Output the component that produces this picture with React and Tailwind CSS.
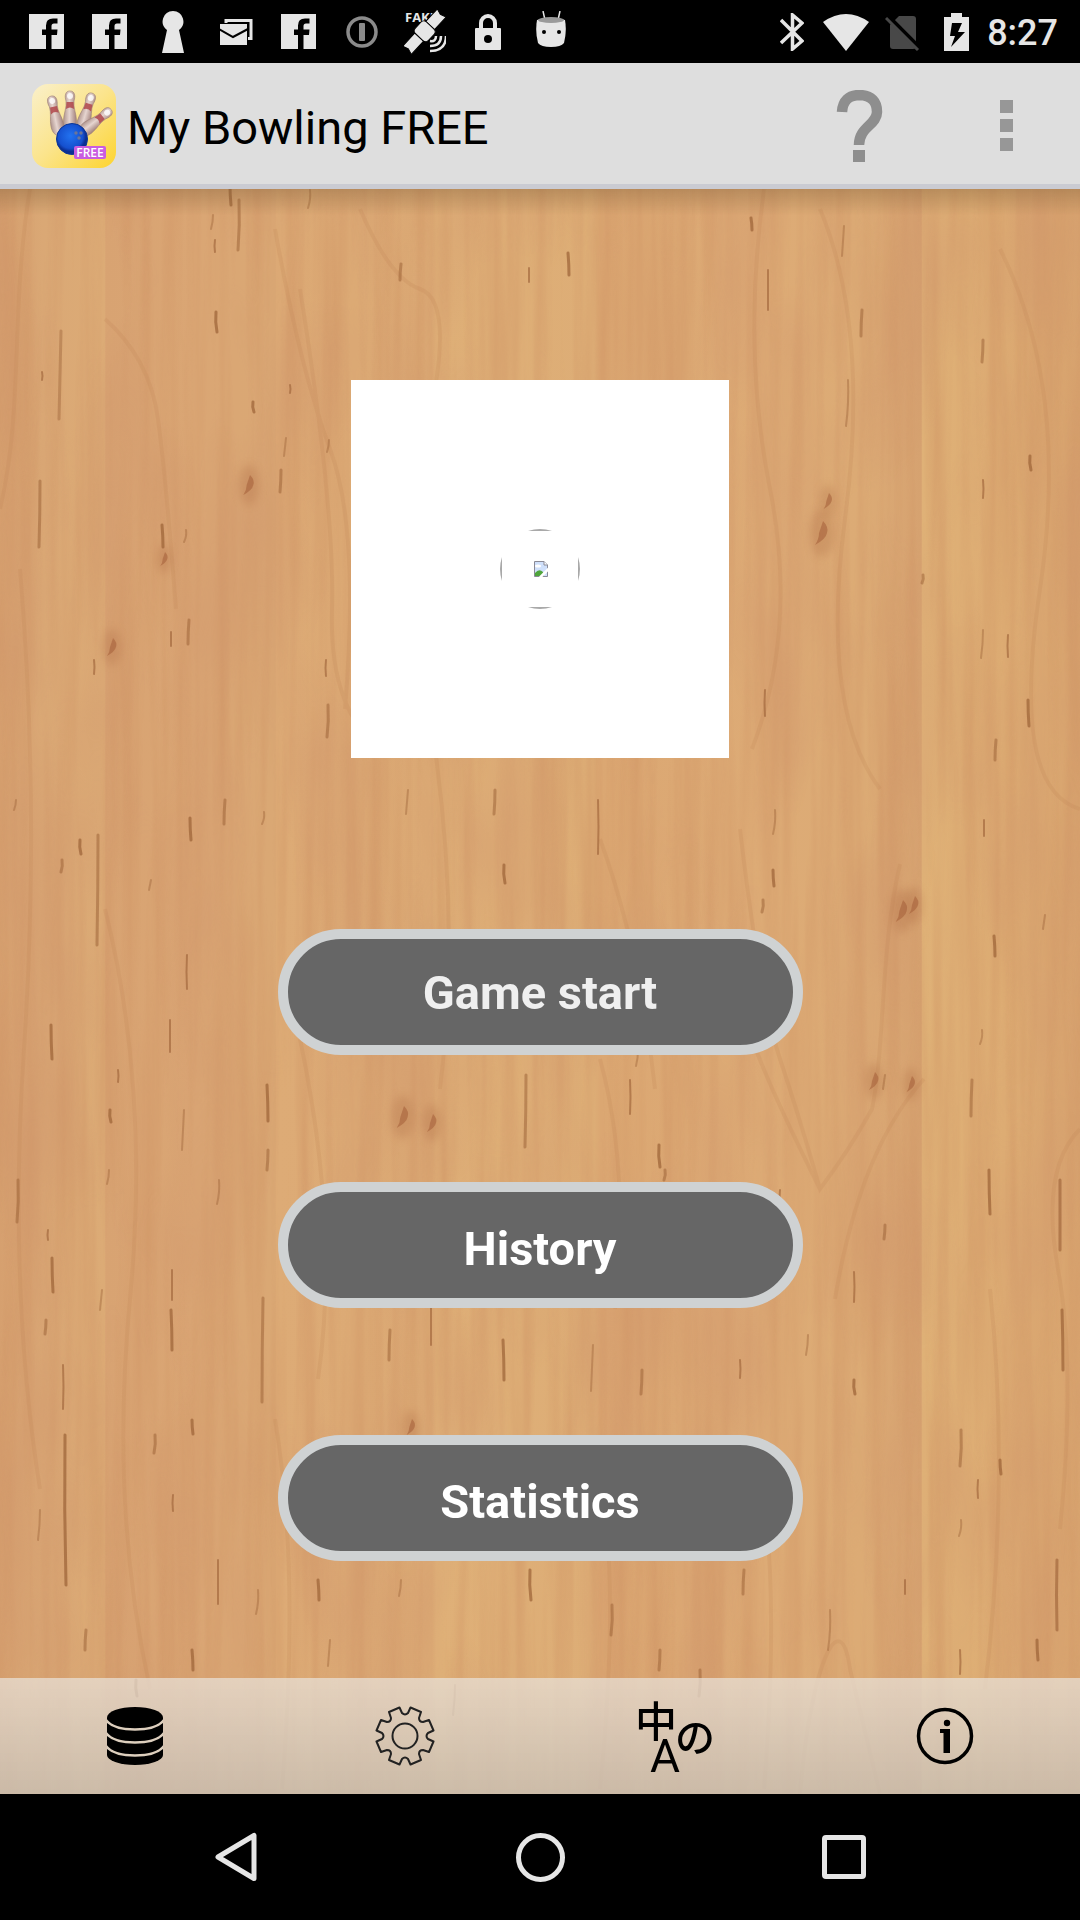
import React from "react";

/* Wood flecks: x, y, length */
const FLECKS = [
  [61, 151, 88], [40, 301, 66], [42, 192, 8], [216, 132, 20], [213, 35, 14], [239, 20, 50], [215, 60, 12],
  [230, 5, 20], [310, 10, 18], [401, 84, 16], [529, 88, 14], [568, 73, 22], [844, 46, 30], [983, 160, 22],
  [983, 300, 18], [1030, 276, 14], [983, 450, 28], [923, 395, 8], [1008, 455, 22], [1028, 520, 26], [848, 200, 46],
  [862, 130, 26], [768, 90, 40], [751, 38, 12], [286, 258, 18], [281, 290, 22], [290, 205, 8], [253, 222, 10],
  [329, 260, 12], [328, 525, 32], [326, 480, 16], [190, 638, 22], [186, 350, 12], [189, 440, 24], [171, 452, 14],
  [162, 345, 22], [151, 700, 10], [98, 655, 110], [94, 480, 14], [80, 660, 14], [16, 620, 10], [62, 680, 12],
  [187, 775, 34], [51, 845, 34], [264, 632, 12], [225, 620, 24], [170, 840, 32], [267, 905, 36], [184, 930, 40],
  [268, 970, 20], [118, 890, 12], [110, 930, 12], [109, 990, 14], [18, 1000, 42], [48, 1050, 10], [52, 1078, 34],
  [219, 1000, 24], [263, 1118, 104], [172, 1090, 30], [171, 1130, 40], [102, 1110, 20], [46, 1140, 14], [63, 1185, 44],
  [65, 1255, 150], [40, 1330, 30], [155, 1255, 18], [173, 1315, 16], [192, 1240, 14], [258, 1410, 24], [86, 1450, 20],
  [218, 1380, 44], [192, 1470, 20], [408, 610, 24], [495, 610, 24], [598, 620, 54], [504, 685, 18], [507, 560, 14],
  [763, 720, 12], [765, 510, 26], [773, 690, 16], [775, 630, 24], [996, 560, 20], [984, 640, 16], [994, 756, 20],
  [1045, 735, 14], [526, 895, 72], [630, 900, 34], [659, 965, 22], [638, 870, 16], [665, 990, 10], [780, 1010, 24],
  [989, 990, 44], [982, 850, 14], [972, 900, 36], [1060, 1000, 70], [1062, 1130, 60], [885, 895, 14], [885, 1045, 14],
  [854, 1092, 30], [854, 1200, 14], [808, 1155, 20], [961, 1250, 36], [978, 1300, 18], [1000, 1280, 14], [961, 1340, 16],
  [390, 1150, 30], [431, 1125, 40], [503, 1160, 40], [593, 1165, 46], [642, 1190, 24], [740, 1180, 18], [530, 1390, 30],
  [401, 1400, 16], [612, 1425, 30], [1057, 1380, 70], [1037, 1460, 20], [830, 1430, 40], [744, 1390, 24], [905, 1400, 14],
  [318, 1400, 20], [330, 1460, 26], [660, 1470, 20], [960, 1470, 24], [136, 1500, 16], [455, 1505, 30], [700, 1490, 26],
];

/* Long soft grain lines that run along the planks */
const GRAIN = [
  "M30 0C10 120 24 220 0 320", "M105 130Q150 170 158 230T176 420", "M275 40Q300 180 330 260T345 520",
  "M300 100Q335 320 332 420T380 560", "M764 0Q742 160 770 300T752 560", "M820 20Q870 140 845 330T880 600",
  "M900 675C880 760 885 860 872 920Q850 960 820 1000Q800 930 780 870T740 640", "M820 1000Q770 900 752 850",
  "M924 890Q860 960 835 1110", "M1080 940Q1040 980 1058 1080T1060 1340", "M600 650Q640 760 655 900",
  "M600 870Q630 980 615 1120", "M435 560Q460 740 440 900", "M105 720Q150 900 130 1110T150 1500",
  "M275 1230Q300 1380 282 1600", "M300 850Q340 1040 318 1190", "M600 1280Q620 1400 600 1600",
  "M800 1605C810 1480 840 1410 850 1480T880 1605", "M760 1280Q780 1400 764 1600", "M1000 60Q1070 200 1040 400T1080 620",
  "M20 380Q40 620 24 860T40 1300", "M360 20Q390 90 420 100T435 200", "M990 1100Q1010 1290 985 1500",
];

/* Knots: x, y, size */
const KNOTS = [[249, 296, 10], [822, 344, 12], [902, 722, 11], [914, 716, 9], [112, 458, 9], [403, 928, 11], [432, 934, 9], [874, 892, 9], [911, 895, 8], [164, 370, 7], [828, 312, 8], [411, 1238, 8]];

function Wood() {
  return (
    <svg className="absolute inset-0 h-full w-full" viewBox="0 0 1080 1605" preserveAspectRatio="xMidYMid slice" aria-hidden="true">
      <defs>
        <linearGradient id="planks" x1="0" x2="1" y1="0" y2="0">
          <stop offset="0" stopColor="#d6a06f" />
          <stop offset="0.04" stopColor="#daa875" />
          <stop offset="0.097" stopColor="#dcab76" />
          <stop offset="0.098" stopColor="#d8a372" />
          <stop offset="0.18" stopColor="#daa674" />
          <stop offset="0.255" stopColor="#daa874" />
          <stop offset="0.256" stopColor="#ddab76" />
          <stop offset="0.4" stopColor="#dba974" />
          <stop offset="0.404" stopColor="#dfb078" />
          <stop offset="0.55" stopColor="#ddad76" />
          <stop offset="0.556" stopColor="#dba772" />
          <stop offset="0.706" stopColor="#ddab76" />
          <stop offset="0.8" stopColor="#dcab75" />
          <stop offset="0.853" stopColor="#d6a270" />
          <stop offset="0.854" stopColor="#dfb177" />
          <stop offset="0.93" stopColor="#ddac73" />
          <stop offset="1" stopColor="#d8a46f" />
        </linearGradient>
        <filter id="fibre" x="0" y="0" width="1" height="1" colorInterpolationFilters="sRGB">
          <feTurbulence type="fractalNoise" baseFrequency="0.06 0.0025" numOctaves="3" seed="8" />
          <feColorMatrix values="0 0 0 0 0.8  0 0 0 0 0.56  0 0 0 0 0.38  1.8 0 0 0 -0.65" />
        </filter>
        <filter id="patches" x="0" y="0" width="1" height="1" colorInterpolationFilters="sRGB">
          <feTurbulence type="fractalNoise" baseFrequency="0.012 0.004" numOctaves="3" seed="3" />
          <feColorMatrix values="0 0 0 0 0.81  0 0 0 0 0.58  0 0 0 0 0.42  0 2 0 0 -0.8" />
        </filter>
        <filter id="soft" x="-1" y="-1" width="3" height="3"><feGaussianBlur stdDeviation="4" /></filter>
        <filter id="slight" x="-0.1" y="-0.1" width="1.2" height="1.2"><feGaussianBlur stdDeviation="0.7" /></filter>
        <linearGradient id="headShade" x1="0" x2="0" y1="0" y2="1">
          <stop offset="0" stopColor="#7a5a34" stopOpacity="0.35" />
          <stop offset="1" stopColor="#7a5a34" stopOpacity="0" />
        </linearGradient>
      </defs>
      <rect width="1080" height="1605" fill="url(#planks)" />
      <rect width="1080" height="1605" filter="url(#fibre)" opacity="0.45" />
      <rect width="1080" height="1605" filter="url(#patches)" opacity="0.45" />
      <g fill="none" stroke="#c08454" strokeWidth="4" opacity="0.2" filter="url(#slight)">
        {GRAIN.map((d) => <path key={d} d={d} />)}
      </g>
      {KNOTS.map(([x, y, s]) => (
        <g key={`${x}-${y}`} fill="#a8643c">
          <ellipse cx={x} cy={y} rx={s} ry={s * 2} opacity="0.25" filter="url(#soft)" />
          <path d={`M${x + 1} ${y - s}q${s / 2} ${s / 2} ${s / 3} ${s}q-1 ${s / 2} -${s} ${s}q${s / 3} -${s / 2} ${s / 3} -${s}z`} opacity="0.6" filter="url(#slight)" />
        </g>
      ))}
      <g fill="none" stroke="#9c6238" strokeLinecap="round" filter="url(#slight)">
        {FLECKS.map(([x, y, l], i) => (
          <path key={i} d={`M${x} ${y - 9}q${(i % 3) - 1} ${l / 2} ${(i % 4) - 2} ${l}`} strokeWidth={l > 60 ? 3 : 2 + (i % 2)} opacity={0.42 + (i % 4) * 0.1} />
        ))}
      </g>
      <rect width="1080" height="26" fill="url(#headShade)" />
    </svg>
  );
}

const FacebookIcon = () => (
  <svg className="h-[35px] w-[35px]" viewBox="0 0 35 35">
    <path fill="#e6e6e6" d="M0 0H35V35H22.500V21H28L28.500 15.500H22.500V12Q22.500 9.500 25 9.500H28.500V4.500H24Q17 4.500 17 11.500V15.500H13V21H17V35H0Z" />
  </svg>
);
const KeyholeIcon = () => (
  <svg className="h-[42px] w-6" viewBox="0 0 24 42">
    <path fill="#e6e6e6" d="M12 0a10.500 10.500 0 0 1 6 19L23 42H1L6 19A10.500 10.500 0 0 1 12 0Z" />
  </svg>
);
const MailIcon = () => (
  <svg className="h-[26px] w-[34px]" viewBox="0 0 34 26">
    <path d="M7 4V1.500H32V19.500H29" fill="none" stroke="#e6e6e6" strokeWidth="3" />
    <path d="M1 5H28V26H1Z" fill="#e6e6e6" />
    <path d="M0 10L14 18L29 10" fill="none" stroke="#000" strokeWidth="2" />
  </svg>
);
const OneIcon = () => (
  <svg className="h-8 w-8" viewBox="0 0 32 32">
    <circle cx="16" cy="16" r="14" fill="none" stroke="#8b8b8b" strokeWidth="3.500" />
    <rect x="13" y="7" width="6" height="18" rx="1" fill="#8b8b8b" />
  </svg>
);
const SatelliteIcon = () => (
  <svg className="h-[54px] w-[42px]" viewBox="0 -6 42 54">
    <text x="1" y="11" fontFamily="Open Sans, sans-serif" fontWeight="700" fontSize="13" fill="#e6e6e6">FAKE</text>
    <g transform="rotate(43 20 21)" fill="#e6e6e6" stroke="#000" strokeWidth="1">
      <path d="M14 -5L20 -3L26 -5V12H14Z" />
      <path d="M14 28H26V46L20 44L14 46Z" />
      <rect x="11" y="12" width="18" height="16" rx="4" />
    </g>
    <path d="M26 30Q32 31 32 25M26 35Q37 35 37 25M26 40Q42 40 42 25" fill="none" stroke="#e6e6e6" strokeWidth="2.500" />
  </svg>
);
const LockIcon = () => (
  <svg className="h-9 w-[26px]" viewBox="0 0 26 36">
    <path d="M6 15V9a7 7 0 0 1 14 0V15" fill="none" stroke="#e6e6e6" strokeWidth="4" />
    <rect y="14" width="26" height="22" rx="1" fill="#e6e6e6" />
    <circle cx="13" cy="25" r="4" fill="#000" />
  </svg>
);
const DroidIcon = () => (
  <svg className="h-[42px] w-[30px]" viewBox="0 0 30 42">
    <path d="M7 0L9 9M24 0L22 9" stroke="#e6e6e6" strokeWidth="1.500" />
    <path d="M1 9Q15 5 29 9Q31 20 28 32Q25 36 15 36T2 32Q-1 20 1 9Z" fill="#e6e6e6" />
    <ellipse cx="15" cy="9" rx="13" ry="3" fill="#9a9a9a" />
    <circle cx="8" cy="21" r="2" /><circle cx="23" cy="21" r="2" />
  </svg>
);

const NOTIFICATIONS = [FacebookIcon, FacebookIcon, KeyholeIcon, MailIcon, FacebookIcon, OneIcon, SatelliteIcon, LockIcon, DroidIcon];

function StatusBar() {
  return (
    <div className="flex h-[63px] shrink-0 items-center justify-between bg-black pl-[15px] pr-[22px]">
      <div className="flex">
        {NOTIFICATIONS.map((Icon, i) => (
          <span key={i} className="flex w-[63px] items-center justify-center"><Icon /></span>
        ))}
      </div>
      <div className="flex items-center">
        <svg className="mr-[19px] h-[38px] w-6" viewBox="0 0 24 38" fill="none" stroke="#e6e6e6" strokeWidth="3.500">
          <path d="M1 7L22 28L12.500 36V2L22 10L1 30" />
        </svg>
        <svg className="mr-4 h-[38px] w-[46px]" viewBox="0 0 46 38"><path d="M0 9Q23 -7 46 9L23 38Z" fill="#e6e6e6" /></svg>
        <svg className="mr-6 h-[38px] w-[35px]" viewBox="0 0 35 38">
          <path d="M10 7L14 3H28Q31 3 31 6V33Q31 36 28 36H8Q5 36 5 33V12Z" fill="#484848" />
          <path d="M3 3L35 35" stroke="#000" strokeWidth="4" /><path d="M1 5L33 37" stroke="#484848" strokeWidth="3" />
        </svg>
        <svg className="mr-[18px] h-[38px] w-[25px]" viewBox="0 0 25 38">
          <path d="M0 4H7V0H18V4H25V38H0Z" fill="#e6e6e6" />
          <path d="M8 10H18L14 19H21L7 34L11 23H6Z" fill="#000" />
        </svg>
        <span className="pt-0.5 text-4xl font-medium leading-10 text-[#e6e6e6]">8:27</span>
      </div>
    </div>
  );
}

/* Bowling pins: x, y, angle */
const PINS = [[20, 16, -12], [38, 11, 0], [59, 13, 16], [76, 28, 52]];

function AppIcon() {
  return (
    <svg className="h-[84px] w-[84px] shrink-0" viewBox="0 0 84 84" aria-hidden="true">
      <defs>
        <linearGradient id="tile" x1="0" y1="0" x2="1" y2="1">
          <stop offset="0" stopColor="#faf0cb" /><stop offset="0.5" stopColor="#fbe48b" /><stop offset="1" stopColor="#fdd42f" />
        </linearGradient>
        <linearGradient id="pin" x1="0" x2="1">
          <stop offset="0" stopColor="#b0958e" /><stop offset="0.45" stopColor="#e6d5d0" /><stop offset="1" stopColor="#a1807a" />
        </linearGradient>
        <radialGradient id="ball" cx="0.45" cy="0.4"><stop offset="0" stopColor="#2272f0" /><stop offset="0.8" stopColor="#1550cf" /><stop offset="1" stopColor="#0b2f94" /></radialGradient>
      </defs>
      <rect width="84" height="84" rx="16" fill="url(#tile)" />
      {PINS.map(([x, y, a]) => (
        <g key={x} transform={`translate(${x} ${y}) rotate(${a})`}>
          <path d="M0 -4C5 -4 5.500 1 4 6C3 12 6.500 19 6.500 26C6.500 32 4 36 0 36S-6.500 32 -6.500 26C-6.500 19 -3 12 -4 6C-5.500 1 -5 -4 0 -4Z" fill="url(#pin)" stroke="#9c7f78" strokeWidth="0.600" />
          <path d="M-3.500 7H3.500L4 14Q0 11 -4 14Z" fill="#b0474a" opacity="0.85" />
          <circle cy="1" r="3" fill="#fff" opacity="0.800" />
        </g>
      ))}
      <circle cx="40" cy="55" r="15.500" fill="url(#ball)" stroke="#0d3796" />
      <g fill="#6b7598"><circle cx="44" cy="49" r="1.700" /><circle cx="49" cy="49" r="1.700" /><circle cx="47" cy="54" r="1.700" /></g>
      <rect x="42" y="62" width="32" height="13" rx="2" fill="#c95ce0" />
      <text x="58" y="73" textAnchor="middle" fontFamily="Open Sans, sans-serif" fontWeight="600" fontSize="12" fill="#fff">FREE</text>
    </svg>
  );
}

function Header() {
  return (
    <header className="flex h-[126px] shrink-0 items-center border-b-[5px] border-[#cacbd2] bg-[#dedede] pl-8 pt-1">
      <AppIcon />
      <h1 className="grow pl-[11px] pt-1 text-[47px] leading-[56px] text-black">My Bowling FREE</h1>
      <button type="button" aria-label="Help" className="flex h-full w-[147px] items-center justify-center pt-0.5">
        <svg className="h-[73px] w-12" viewBox="0 0 48 73">
          <path d="M6 22Q7 5 24 5Q41 6 41 22C41 35 23 37 23 55" fill="none" stroke="#8e8e8e" strokeWidth="10.500" />
          <rect x="17" y="60" width="12" height="12" fill="#8e8e8e" />
        </svg>
      </button>
      <button type="button" aria-label="More options" className="flex h-full w-[147px] flex-col items-center justify-center gap-[6px]">
        <span className="h-[13px] w-[13px] bg-[#979797]" />
        <span className="h-[13px] w-[13px] bg-[#979797]" />
        <span className="h-[13px] w-[13px] bg-[#979797]" />
      </button>
    </header>
  );
}

function ImageFrame() {
  return (
    <div className="flex aspect-square w-[35%] items-center justify-center bg-white">
      <svg className="h-20 w-20" viewBox="0 0 80 80" role="img" aria-label="Image not available">
        <path d="M28 2Q40 -2 52 2ZM28 78Q40 82 52 78ZM2 28Q-2 40 2 52ZM78 28Q82 40 78 52Z" fill="#a9a9a9" />
        <path d="M34.500 32.500H44L47.500 36V47.500H34.500Z" fill="#cfe0fb" stroke="#8a8a96" />
        <path d="M44 32.500V36H47.500" fill="#fff" stroke="#8a8a96" />
        <ellipse cx="38" cy="37" rx="3" ry="1.500" fill="#fff" />
        <path d="M35 47V44Q39 39 43 43L44 47Z" fill="#4fa53c" />
        <path d="M40 48.500L49 39.500" stroke="#fff" strokeWidth="2.500" />
      </svg>
    </div>
  );
}

function MenuButton({ focused, children }) {
  return (
    <button type="button" className={`h-[126px] w-full rounded-full border-[10px] border-[#cfd2d3] bg-[#666] text-[47px] font-bold leading-[56px] ${focused ? "pt-0.5 text-[#efefef]" : "pt-2 text-white"}`}>
      {children}
    </button>
  );
}

function BottomBar() {
  const cell = "flex items-center justify-center";
  return (
    <nav className="relative grid h-[116px] shrink-0 grid-cols-4 bg-linear-to-b from-[#e8e0d6]/75 to-[#c8c0b5]/80">
      <button type="button" aria-label="Data" className={cell}>
        <svg className="h-[58px] w-14" viewBox="0 0 56 58">
          <path d="M0 10.500A28 10.500 0 0 1 56 10.500V48A28 10 0 0 1 0 48Z" />
          <path d="M-1 13Q6 22.500 28 22.500T57 13M-1 26Q6 35.500 28 35.500T57 26M-1 39Q6 48.500 28 48.500T57 39" fill="none" stroke="#ddcfbe" strokeWidth="2.500" />
        </svg>
      </button>
      <button type="button" aria-label="Settings" className={cell}>
        <svg className="h-[60px] w-[60px]" viewBox="-30 -30 60 60" fill="none" stroke="#222" strokeWidth="2" strokeLinejoin="round">
          <path d="M-5.500 -28.500L-16 -24L-14 -18Q-14 -14 -18 -14L-24 -16L-28.500 -5.500L-23 -3Q-20 0 -23 3L-28.500 5.500L-24 16L-18 14Q-14 14 -14 18L-16 24L-5.500 28.500L-3 23Q0 20 3 23L5.500 28.500L16 24L14 18Q14 14 18 14L24 16L28.500 5.500L23 3Q20 0 23 -3L28.500 -5.500L24 -16L18 -14Q14 -14 14 -18L16 -24L5.500 -28.500L3 -23Q0 -20 -3 -23Z" />
          <circle r="12.500" />
        </svg>
      </button>
      <button type="button" aria-label="Language" className={cell}>
        <svg className="h-[116px] w-[100px]" viewBox="-10 -18 100 116" fontFamily="Noto Sans CJK JP, sans-serif" fontWeight="500">
          <text x="0" y="41" fontSize="42">中</text>
          <text x="40" y="56" fontSize="40">の</text>
          <text x="15" y="76" fontSize="46" fontFamily="Roboto, sans-serif" fontWeight="400">A</text>
        </svg>
      </button>
      <button type="button" aria-label="Information" className={cell}>
        <svg className="h-[58px] w-[58px]" viewBox="0 0 58 58">
          <circle cx="29" cy="29" r="26.500" fill="none" stroke="#000" strokeWidth="3.500" />
          <circle cx="31" cy="16" r="3.200" />
          <path d="M24 22H34V46H27.500V26H24Z" />
        </svg>
      </button>
    </nav>
  );
}

function SystemNav() {
  const cell = "flex items-center justify-center";
  return (
    <nav className="grid h-[126px] shrink-0 grid-cols-3 bg-black px-[84px]">
      <button type="button" aria-label="Back" className={cell}>
        <svg className="h-[50px] w-[50px]" viewBox="0 0 50 50" fill="none" stroke="#e6e6e6" strokeWidth="5" strokeLinejoin="round"><path d="M43 3.500V46.500L7 25Z" /></svg>
      </button>
      <button type="button" aria-label="Home" className={cell}>
        <span className="h-[49px] w-[49px] rounded-full border-[5px] border-[#e6e6e6]" />
      </button>
      <button type="button" aria-label="Recent apps" className={cell}>
        <span className="h-11 w-11 rounded-sm border-[5px] border-[#e6e6e6]" />
      </button>
    </nav>
  );
}

export default function App() {
  return (
    <div className="flex min-h-screen flex-col bg-black font-[Roboto,sans-serif]">
      <StatusBar />
      <Header />
      <div className="relative flex grow flex-col overflow-hidden bg-[#d9a671]">
        <Wood />
        <main className="relative flex grow flex-col items-center pt-[191px] pb-[116px]">
          <ImageFrame />
          <div className="mt-[171px] flex w-[525px] max-w-full flex-col gap-[127px]">
            <MenuButton focused>Game start</MenuButton>
            <MenuButton>History</MenuButton>
            <MenuButton>Statistics</MenuButton>
          </div>
        </main>
        <BottomBar />
      </div>
      <SystemNav />
    </div>
  );
}
